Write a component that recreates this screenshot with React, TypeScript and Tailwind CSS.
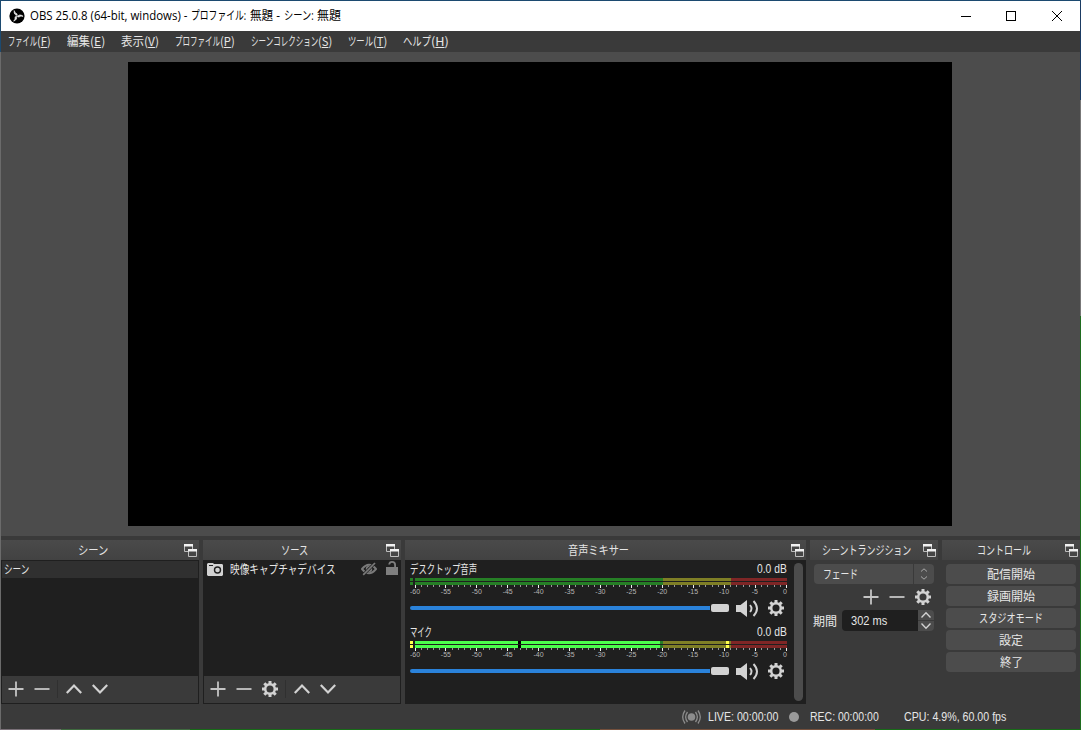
import { useLayoutEffect, useRef, useState } from "react";
import type { ReactNode } from "react";

// Text squeezed or stretched to the width of the bitmap UI font
const Fit = ({ w, children, className = "" }: { w: number; children: ReactNode; className?: string }) => {
  const ref = useRef<HTMLSpanElement>(null);
  const [scale, setScale] = useState(1);
  useLayoutEffect(() => {
    if (ref.current) setScale(w / ref.current.offsetWidth);
  }, [w]);
  return (
    <span className={`inline-flex shrink-0 ${className}`} style={{ width: w }}>
      <span
        ref={ref}
        className="inline-block shrink-0 origin-left whitespace-nowrap"
        style={{ transform: `scaleX(${scale})` }}
      >
        {children}
      </span>
    </span>
  );
};

const Logo = () => (
  <svg width="16" height="16" viewBox="0 0 16 16" className="ml-2 shrink-0">
    <circle cx="8" cy="8" r="7.6" fill="#000" />
    {[0, 120, 240].map((a) => (
      <path
        key={a}
        d="M8.6 7.4Q4.6 7.2 5.2 2.6Q5.6 5 8.2 6"
        transform={`rotate(${a} 8 8)`}
        fill="#e8e8e8"
        stroke="#e8e8e8"
        strokeWidth=".7"
      />
    ))}
  </svg>
);

const Popout = () => (
  <svg width="13" height="13" viewBox="0 0 13 13" className="shrink-0">
    <path d="M.5 1V7.5H8.5V1" fill="none" stroke="#bdbdbd" />
    <path d="M0 0H9V2.5H0Z" fill="#f2f2f2" />
    <rect x="4" y="5" width="9" height="8" fill="#464646" />
    <path d="M4.5 6V12.5H12.5V6" fill="none" stroke="#bdbdbd" />
    <path d="M4 5H13V7.5H4Z" fill="#f2f2f2" />
  </svg>
);

const Plus = () => (
  <svg width="16" height="16" viewBox="0 0 16 16">
    <path d="M8 .5V15.5M.5 8H15.5" stroke="#c4c4c4" strokeWidth="1.8" />
  </svg>
);

const Minus = () => (
  <svg width="16" height="16" viewBox="0 0 16 16">
    <path d="M.5 8H15.5" stroke="#c4c4c4" strokeWidth="1.8" />
  </svg>
);

const Up = () => (
  <svg width="16" height="16" viewBox="0 0 16 16">
    <path d="M.8 12L8 4.5L15.2 12" fill="none" stroke="#d2d2d2" strokeWidth="2.2" />
  </svg>
);

const Down = () => (
  <svg width="16" height="16" viewBox="0 0 16 16">
    <path d="M.8 4L8 11.5L15.2 4" fill="none" stroke="#d2d2d2" strokeWidth="2.2" />
  </svg>
);

const Gear = () => (
  <svg width="16" height="16" viewBox="0 0 16 16" stroke="#d2d2d2" fill="none">
    <circle cx="8" cy="8" r="4.8" strokeWidth="2.5" />
    <path
      d="M8 0V3M8 13V16M0 8H3M13 8H16M2.3 2.3L4.4 4.4M11.6 11.6L13.7 13.7M2.3 13.7L4.4 11.6M11.6 4.4L13.7 2.3"
      strokeWidth="3"
    />
  </svg>
);

const Speaker = () => (
  <svg width="23" height="17" viewBox="0 0 23 17">
    <path d="M0 5H4.5L11 0V17L4.5 12H0Z" fill="#d2d2d2" />
    <path d="M14 5Q17 8.5 14 12M17.5 1Q24.5 8.5 17.5 16" fill="none" stroke="#d2d2d2" strokeWidth="1.9" />
  </svg>
);

const Camera = () => (
  <svg width="16" height="13" viewBox="0 0 16 13">
    <path d="M1 0H6L7 1H15.2L16 2V12L15 13H1L0 12V1Z" fill="#d2d2d2" />
    <path d="M2 2.5H6" stroke="#1f1f1f" />
    <circle cx="10.5" cy="7" r="3" fill="none" stroke="#1f1f1f" strokeWidth="1.4" />
  </svg>
);

const HiddenEye = () => (
  <svg width="16" height="14" viewBox="0 0 16 14" fill="none" stroke="#7a7a7a">
    <path d="M1 7Q8 -1.5 15 7Q8 15.5 1 7Z" strokeWidth="2" />
    <circle cx="8" cy="7" r="2.3" strokeWidth="1.8" />
    <path d="M2 13L14 1" stroke="#1f1f1f" strokeWidth="3" />
    <path d="M2.2 12.8L14 1" strokeWidth="1.7" />
  </svg>
);

const Unlocked = () => (
  <svg width="12" height="14" viewBox="0 0 12 14">
    <rect y="6" width="12" height="8" fill="#7f7f7f" />
    <path d="M3.2 3.5Q3.5 .9 6 .9Q9.1 .9 9.1 4V6" fill="none" stroke="#7f7f7f" strokeWidth="1.8" />
  </svg>
);

const Live = () => (
  <svg width="19" height="14" viewBox="0 0 19 14" fill="none" stroke="#8c8c8c" strokeWidth="1.3">
    <circle cx="9.5" cy="7" r="3.8" fill="#8c8c8c" stroke="none" />
    <path d="M5.5 2Q1.8 7 5.5 12M13.5 2Q17.2 7 13.5 12M3 .5Q-1.6 7 3 13.5M16 .5Q20.6 7 16 13.5" />
  </svg>
);

const DockTitle = ({ title, w }: { title: string; w: number }) => (
  <div className="flex h-5 shrink-0 items-center bg-linear-to-b from-[#4a4a4a] to-[#424242] pr-0.5">
    <div className="flex flex-1 justify-center pb-px">
      <Fit w={w}>{title}</Fit>
    </div>
    <Popout />
  </div>
);

const menus = [
  { label: "ファイル", w: 29, key: "F", keyW: 14 },
  { label: "編集", w: 23, key: "E", keyW: 15 },
  { label: "表示", w: 23, key: "V", keyW: 15 },
  { label: "プロファイル", w: 45, key: "P", keyW: 15 },
  { label: "シーンコレクション", w: 67, key: "S", keyW: 14 },
  { label: "ツール", w: 25, key: "T", keyW: 14 },
  { label: "ヘルプ", w: 28, key: "H", keyW: 18 },
];

const Meter = ({ active = false }: { active?: boolean }) => {
  const rows = [0, 4];
  return (
    <svg width="384" height="20" viewBox="0 0 384 20" className="block" shapeRendering="crispEdges">
      {rows.map((y) => (
        <g key={y}>
          <rect x="0" y={y} width="3" height="3" fill={active ? "#ffff4c" : "#267f26"} />
          <rect x="5" y={y} width="248" height="3" fill="#267f26" />
          <rect x="253" y={y} width="68" height="3" fill="#7f7f26" />
          <rect x="321" y={y} width="56" height="3" fill="#7f2626" />
          {active && (
            <>
              <rect x="5" y={y} width="245" height="3" fill="#4cff4c" />
              <rect x="108" y={y} width="3" height="3" fill="#000" />
              <rect x="316" y={y} width="3" height="3" fill="#ffff4c" />
            </>
          )}
        </g>
      ))}
      {Array.from({ length: 61 }, (_, i) => {
        const x = Math.floor(5 + i * 6.19);
        const major = i % 5 === 0;
        return <rect key={i} x={x} y="7" width="1" height={major ? 3 : 2} fill={major ? "#f0f0f0" : "#9a9a9a"} />;
      })}
      {Array.from({ length: 13 }, (_, i) => (
        <text
          key={i}
          x={i === 12 ? 375 : 5 + i * 30.9}
          y="16"
          textAnchor="middle"
          fill="#b5b5b5"
          className="font-['Liberation_Sans'] text-[7px]"
        >
          {i * 5 - 60}
        </text>
      ))}
    </svg>
  );
};

const Channel = ({ name, w, active }: { name: string; w: number; active?: boolean }) => (
  <div className="h-[63px] pt-0.5 pl-[5px]">
    <div className="flex h-4 w-[377px] items-center justify-between pb-0.5">
      <Fit w={w}>{name}</Fit>
      <Fit w={30} className="font-['Liberation_Sans',sans-serif]">
        0.0 dB
      </Fit>
    </div>
    <Meter active={active} />
    <div className="flex h-5 items-center">
      <div className="h-1 w-[300px] rounded-l-sm bg-[#2a82da]" />
      <div className="ml-px h-2 w-[18px] rounded-xs bg-[#d2d2d2]" />
      <div className="ml-[7px]">
        <Speaker />
      </div>
      <div className="ml-[9px]">
        <Gear />
      </div>
    </div>
  </div>
);

const controls = [
  { label: "配信開始", w: 48 },
  { label: "録画開始", w: 48 },
  { label: "スタジオモード", w: 64 },
  { label: "設定", w: 24 },
  { label: "終了", w: 23 },
];

const App = () => {
  return (
    <div className="flex h-[730px] w-[1081px] flex-col overflow-hidden bg-[#3a3a3a] font-['Noto_Sans_CJK_JP',sans-serif] text-xs leading-4 text-[#e6e6e6]">
      <div className="h-px shrink-0 bg-[#1c4a70]" />
      <div className="flex h-[728px] shrink-0">
        {/* desktop showing along the window edge */}
        <div className="w-px shrink-0">
          <div className="h-[51px] bg-[#1c4a70]" />
          <div className="h-[677px] bg-[#6b6b6b]" />
        </div>
        <div className="flex w-[1079px] shrink-0 flex-col">
          <header className="flex h-[30px] shrink-0 items-center bg-white text-black">
            <Logo />
            <div className="ml-[5px] flex font-['Open_Sans','Noto_Sans_CJK_JP',sans-serif]">
              <Fit w={157}>OBS 25.0.8 (64-bit, windows) -</Fit>
              <Fit w={55} className="ml-1">
                プロファイル:
              </Fit>
              <Fit w={30} className="ml-1">
                無題 -
              </Fit>
              <Fit w={30} className="ml-1">
                シーン:
              </Fit>
              <Fit w={24} className="ml-[3px]">
                無題
              </Fit>
            </div>
            <svg width="104" height="12" viewBox="0 0 104 12" className="mr-4 mb-px ml-auto" fill="none" stroke="#000">
              <path d="M1 6.5H11M46.5 1.5H55.5V10.5H46.5Z" shapeRendering="crispEdges" />
              <path d="M92 1L102 11M102 1L92 11" />
            </svg>
          </header>

          <nav className="flex h-[21px] shrink-0 items-center gap-4 pb-px pl-[7px]">
            {menus.map((m) => (
              <div key={m.key} className="flex">
                <Fit w={m.w}>{m.label}</Fit>
                <Fit w={m.keyW}>
                  (<span className="underline">{m.key}</span>)
                </Fit>
              </div>
            ))}
          </nav>

          <main className="flex h-[484px] shrink-0 bg-[#4c4c4c] pt-2.5 pl-[127px]">
            <div className="h-[464px] w-[824px] bg-black" />
          </main>

          <div className="flex h-[168px] shrink-0 gap-1 pt-1">
            <section className="flex w-[198px] flex-col">
              <DockTitle title="シーン" w={30} />
              <div className="flex h-36 flex-col border border-[#1f1f1f] bg-[#1f1f1f]">
                <div className="flex h-[17px] items-center bg-[#303030] pb-px pl-0.5">
                  <Fit w={25}>シーン</Fit>
                </div>
                <div className="mt-auto flex h-[27px] items-center gap-2.5 bg-[#3a3a3a] pb-0.5 pl-1.5">
                  <Plus />
                  <Minus />
                  <div className="-mr-[5px] h-[18px] w-px -translate-x-[3px] bg-[#303030]" />
                  <Up />
                  <Down />
                </div>
              </div>
            </section>

            <section className="flex w-[198px] flex-col">
              <DockTitle title="ソース" w={27} />
              <div className="flex h-36 flex-col border border-[#1f1f1f] bg-[#1f1f1f]">
                <div className="flex h-[17px] items-center pb-px pl-[3px]">
                  <Camera />
                  <Fit w={106} className="ml-[7px]">
                    映像キャプチャデバイス
                  </Fit>
                  <div className="ml-auto">
                    <HiddenEye />
                  </div>
                  <div className="mr-0.5 ml-[9px] -translate-y-px">
                    <Unlocked />
                  </div>
                </div>
                <div className="mt-auto flex h-[27px] items-center gap-2.5 bg-[#3a3a3a] pb-0.5 pl-1.5">
                  <Plus />
                  <Minus />
                  <Gear />
                  <div className="-mr-[5px] h-[18px] w-px -translate-x-[3px] bg-[#303030]" />
                  <Up />
                  <Down />
                </div>
              </div>
            </section>

            <section className="flex w-[401px] flex-col">
              <DockTitle title="音声ミキサー" w={61} />
              <div className="flex h-36 justify-between bg-[#1f1f1f]">
                <div>
                  <Channel name="デスクトップ音声" w={67} />
                  <Channel name="マイク" w={22} active />
                </div>
                <div className="mt-[3px] mr-[3px] h-[138px] w-2.5 rounded-full bg-[#4c4c4c]" />
              </div>
            </section>

            <section className="flex w-32 flex-col">
              <DockTitle title="シーントランジション" w={89} />
              <div className="px-1 pt-1">
                <div className="flex h-5 gap-px">
                  <div className="flex w-[99px] items-center rounded-l-sm bg-[#4c4c4c] pb-px pl-[9px]">
                    <Fit w={35}>フェード</Fit>
                  </div>
                  <div className="flex w-5 items-center justify-center rounded-r-sm bg-[#4c4c4c]">
                    <svg width="8" height="12" viewBox="0 0 8 12" fill="none" stroke="#a8a8a8">
                      <path d="M1 3.5L4 .8L7 3.5M1 8.5L4 11.2L7 8.5" />
                    </svg>
                  </div>
                </div>
                <div className="flex h-[26px] items-center justify-end gap-2.5 pr-[3px]">
                  <Plus />
                  <Minus />
                  <Gear />
                </div>
                <div className="flex h-[21px] items-center">
                  <Fit w={24} className="-ml-px">
                    期間
                  </Fit>
                  <div className="ml-[5px] flex h-full w-[76px] items-center rounded-l-sm bg-[#1f1f1f] pl-[9px] font-['Liberation_Sans',sans-serif]">
                    <Fit w={36}>302 ms</Fit>
                  </div>
                  <div className="flex h-full w-4 flex-col gap-px">
                    <div className="flex h-2.5 items-center justify-center rounded-tr-sm bg-[#4c4c4c] [&>svg]:size-2.5">
                      <Up />
                    </div>
                    <div className="flex h-2.5 items-center justify-center rounded-br-sm bg-[#4c4c4c] [&>svg]:size-2.5">
                      <Down />
                    </div>
                  </div>
                </div>
              </div>
            </section>

            <section className="flex w-[138px] flex-col">
              <DockTitle title="コントロール" w={54} />
              <div className="flex flex-col gap-0.5 px-1 pt-1">
                {controls.map((c) => (
                  <button
                    key={c.label}
                    className="flex h-5 w-[130px] items-center justify-center rounded-sm bg-[#4c4c4c] pb-px"
                  >
                    <Fit w={c.w}>{c.label}</Fit>
                  </button>
                ))}
              </div>
            </section>
          </div>

          <footer className="flex h-[25px] shrink-0 items-center pl-[681px] font-['Liberation_Sans',sans-serif]">
            <Live />
            <Fit w={70} className="ml-[7px]">
              LIVE: 00:00:00
            </Fit>
            <div className="mr-[11px] ml-[11px] size-2.5 rounded-full bg-[#9a9a9a]" />
            <Fit w={69}>REC: 00:00:00</Fit>
            <Fit w={102} className="ml-[25px]">
              CPU: 4.9%, 60.00 fps
            </Fit>
          </footer>
        </div>
        <div className="w-px shrink-0">
          <div className="h-[99px] bg-[#1b3b63]" />
          <div className="h-[216px] bg-[#777777]" />
          <div className="h-[413px] bg-[#1f6b1f]" />
        </div>
      </div>
      <div className="flex h-px shrink-0 bg-[#176b17]">
        <div className="w-[61px] bg-[#7a7078]" />
        <div className="w-[129px] bg-[#3f6b3f]" />
        <div className="ml-[410px] w-[275px] bg-[#75503c]" />
      </div>
    </div>
  );
};

export default App;
